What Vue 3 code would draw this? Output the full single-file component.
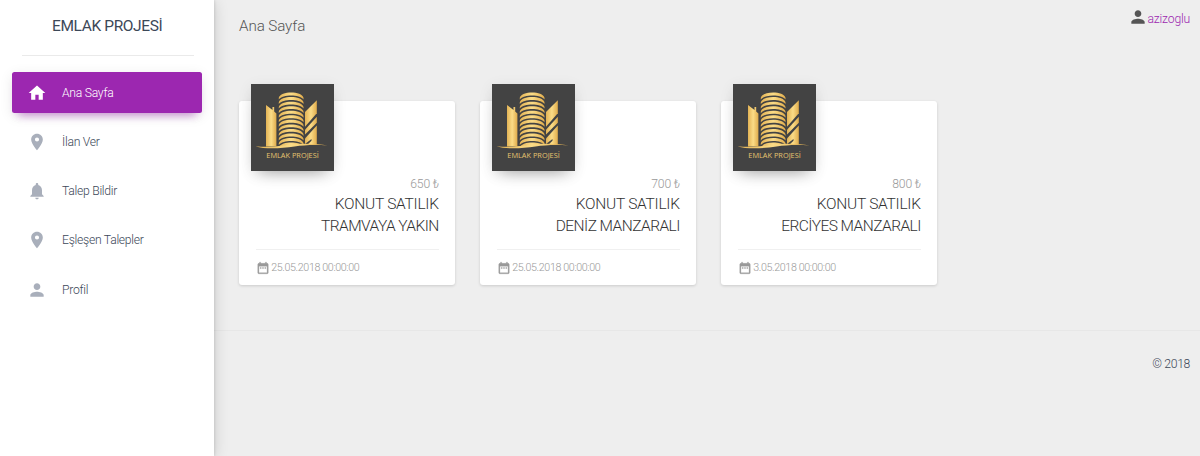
<script setup>
const menu = [
  { label: 'Ana Sayfa', icon: 'home', active: true },
  { label: 'İlan Ver', icon: 'pin' },
  { label: 'Talep Bildir', icon: 'bell' },
  { label: 'Eşleşen Talepler', icon: 'pin' },
  { label: 'Profil', icon: 'person' }
]

const icons = {
  home: 'M10 20v-6h4v6h5v-8h3L12 3 2 12h3v8z',
  pin: 'M12 2C8.130 2 5 5.130 5 9c0 5.250 7 13 7 13s7-7.750 7-13c0-3.870-3.130-7-7-7zm0 9.500a2.500 2.500 0 0 1 0-5 2.500 2.500 0 0 1 0 5z',
  bell: 'M12 22c1.100 0 2-.9 2-2h-4c0 1.100.89 2 2 2zm6-6v-5c0-3.070-1.640-5.640-4.500-6.320V4c0-.83-.67-1.500-1.500-1.500s-1.500.67-1.500 1.500v.68C7.630 5.360 6 7.920 6 11v5l-2 2v1h16v-1l-2-2z',
  person: 'M12 12c2.210 0 4-1.790 4-4s-1.790-4-4-4-4 1.790-4 4 1.790 4 4 4zm0 2c-2.670 0-8 1.340-8 4v2h16v-2c0-2.660-5.330-4-8-4z',
  calendar: 'M9 11H7v2h2v-2zm4 0h-2v2h2v-2zm4 0h-2v2h2v-2zm2-7h-1V2h-2v2H8V2H6v2H5c-1.110 0-1.990.9-1.990 2L3 20c0 1.100.89 2 2 2h14c1.100 0 2-.9 2-2V6c0-1.100-.9-2-2-2zm0 16H5V9h14v11z'
}

const listings = [
  { price: '650 ₺', title: 'KONUT SATILIK', detail: 'TRAMVAYA YAKIN', date: '25.05.2018 00:00:00' },
  { price: '700 ₺', title: 'KONUT SATILIK', detail: 'DENİZ MANZARALI', date: '25.05.2018 00:00:00' },
  { price: '800 ₺', title: 'KONUT SATILIK', detail: 'ERCİYES MANZARALI', date: '3.05.2018 00:00:00' }
]

const floors = Array.from({ length: 12 }, (_, i) => 13.8 + i * 4.550)
</script>

<template>
  <div class="page">
    <aside class="sidebar">
      <div class="brand">EMLAK PROJESİ</div>
      <nav>
        <a v-for="item in menu" :key="item.label" class="nav-item" :class="{ active: item.active }">
          <svg class="nav-icon" viewBox="0 0 24 24"><path :d="icons[item.icon]" /></svg>
          <span>{{ item.label }}</span>
        </a>
      </nav>
    </aside>
    <main class="main">
      <header class="topbar">
        <h1>Ana Sayfa</h1>
        <a class="user">
          <svg viewBox="0 0 24 24"><path :d="icons.person" /></svg>
          <span>azizoglu</span>
        </a>
      </header>
      <section class="cards">
        <article v-for="card in listings" :key="card.detail" class="card">
          <svg class="logo" viewBox="0 0 83 87">
            <defs>
              <linearGradient id="gold" x1="0" x2="1" y1="0" y2="0">
                <stop offset="0" stop-color="#e3b355" />
                <stop offset=".5" stop-color="#fbdc87" />
                <stop offset="1" stop-color="#e0ac4c" />
              </linearGradient>
              <clipPath id="tower"><path d="M27 0h27v60.500q-14 .3-27 2z" /></clipPath>
            </defs>
            <rect width="83" height="87" fill="#434343" />
            <g fill="url(#gold)">
              <path d="M15 21l6.500 5v-3h1.700v4.500l2.200 2V62.500H15z" />
              <g clip-path="url(#tower)">
                <path v-for="y in floors" :key="y" :d="`M27.800 ${y}C29.500 ${y - 7} 50.800 ${y - 7} 52.500 ${y}v1.700C48.500 ${y - 3.700} 31.800 ${y - 3.700} 27.800 ${y + 1.700}z`" />
              </g>
              <path d="M54 28L65.800 16.300v13L54 42.700z" />
              <path d="M54 45.800L65.800 32.800v6L54 50.500z" />
              <path d="M54 54.500L65.800 41.500V60.500L54 61z" />
              <path d="M54 60L60.500 55v1.800L56.500 60.500z" fill="#434343" />
              <path d="M4.500 62.200c18 2.200 29-1.700 43-2.400 11-.5 22 .2 29 1.800-13-1-23-.4-33 1-14 2-30 2.800-39-.4z" />
            </g>
            <text x="15.300" y="74.200" textLength="52.500" lengthAdjust="spacingAndGlyphs">EMLAK PROJESİ</text>
          </svg>
          <div class="content">
            <p class="price">{{ card.price }}</p>
            <h3>{{ card.title }}<br /><span class="detail">{{ card.detail }}</span></h3>
          </div>
          <footer class="date">
            <svg viewBox="0 0 24 24"><path :d="icons.calendar" /></svg>
            <span>{{ card.date }}</span>
          </footer>
        </article>
      </section>
      <footer class="copyright">© 2018</footer>
    </main>
  </div>
</template>

<style>
body {
  overflow: hidden;
}
</style>

<style scoped>
.page {
  display: flex;
  height: 456px;
  background: #eee;
  font-family: Roboto, "Liberation Sans", sans-serif;
  font-weight: 300;
  color: #3c4858;
}
svg {
  display: block;
  fill: currentColor;
  flex: none;
}
.sidebar {
  box-sizing: border-box;
  width: 214.400px;
  flex: none;
  background: #fff;
  position: relative;
  box-shadow: 0 0 3px rgba(0, 0, 0, .16), 0 2px 14px rgba(0, 0, 0, .16);
}
.brand {
  box-sizing: border-box;
  height: 56px;
  margin: 0 20px 0 22px;
  padding-right: 2px;
  border-bottom: 1px solid #eaeaea;
  text-align: center;
  font-size: 15.500px;
  letter-spacing: -.38px;
  font-weight: 400;
  line-height: 53px;
}
nav {
  padding: 16px 12.400px 0 12.400px;
}
.nav-item {
  display: flex;
  align-items: center;
  height: 41px;
  margin-bottom: 8.300px;
  border-radius: 2.500px;
  font-size: 12.200px;
  letter-spacing: -.28px;
}
.nav-icon {
  width: 20px;
  height: 20px;
  margin: 0 15px 0 14.600px;
  color: #a9afbb;
}
.active {
  background: #9c27b0;
  color: #fff;
  box-shadow: 0 10px 8px -8px rgba(156, 39, 176, .35), 0 3px 14px rgba(0, 0, 0, .09), 0 6px 8px -4px rgba(156, 39, 176, .2);
}
.active .nav-icon {
  color: #fff;
}
.main {
  flex: 1;
}
.topbar {
  display: flex;
  justify-content: space-between;
  height: 101px;
  padding: 0 10px 0 24.600px;
}
h1 {
  margin: 0;
  font-size: 15.200px;
  letter-spacing: -.1px;
  font-weight: 300;
  line-height: 53px;
  color: #555;
}
.user {
  display: flex;
  align-items: center;
  height: 34px;
  color: #9c27b0;
  font-size: 12.200px;
  letter-spacing: -.2px;
}
.user svg {
  width: 20px;
  height: 20px;
  color: #555;
}
.user span {
  padding-top: 3px;
}
.cards {
  display: flex;
  gap: 25px;
  padding-left: 24.800px;
}
.card {
  box-sizing: border-box;
  position: relative;
  width: 216px;
  height: 184px;
  padding: 76px 16.400px 0 17px;
  border-radius: 3px;
  background: #fff;
  box-shadow: 0 1px 3px rgba(0, 0, 0, .15);
}
.logo {
  position: absolute;
  left: 12px;
  top: -16.700px;
  width: 83px;
  height: 87px;
  box-shadow: 0 8px 16px -9px rgba(0, 0, 0, .4), 0 3px 14px rgba(0, 0, 0, .08);
}
.logo text {
  font-family: "Open Sans", sans-serif;
  font-size: 8px;
  font-weight: 400;
  fill: #e6c470;
}
.content {
  height: 72px;
  margin-top: -1px;
  padding-bottom: 1px;
  box-sizing: content-box;
  text-align: right;
  border-bottom: 1px solid #f0f0f0;
}
.price {
  margin: 0;
  font-size: 12.200px;
  letter-spacing: -.2px;
  line-height: 17px;
  color: #999;
}
h3 {
  margin: 0;
  font-size: 15.500px;
  letter-spacing: -.25px;
  font-weight: 300;
  line-height: 22px;
  color: #333;
}
.detail {
  letter-spacing: -.55px;
}
.date {
  display: flex;
  align-items: center;
  gap: 1px;
  height: 35px;
  color: #999;
  font-size: 10.700px;
  letter-spacing: -.37px;
}
.date svg {
  width: 14px;
  height: 14px;
  stroke: currentColor;
  stroke-width: .5px;
}
.copyright {
  margin-top: 45px;
  padding: 0 10px 0 0;
  border-top: 1px solid #e7e7e7;
  text-align: right;
  font-size: 12.200px;
  letter-spacing: -.35px;
  line-height: 66px;
}
</style>
